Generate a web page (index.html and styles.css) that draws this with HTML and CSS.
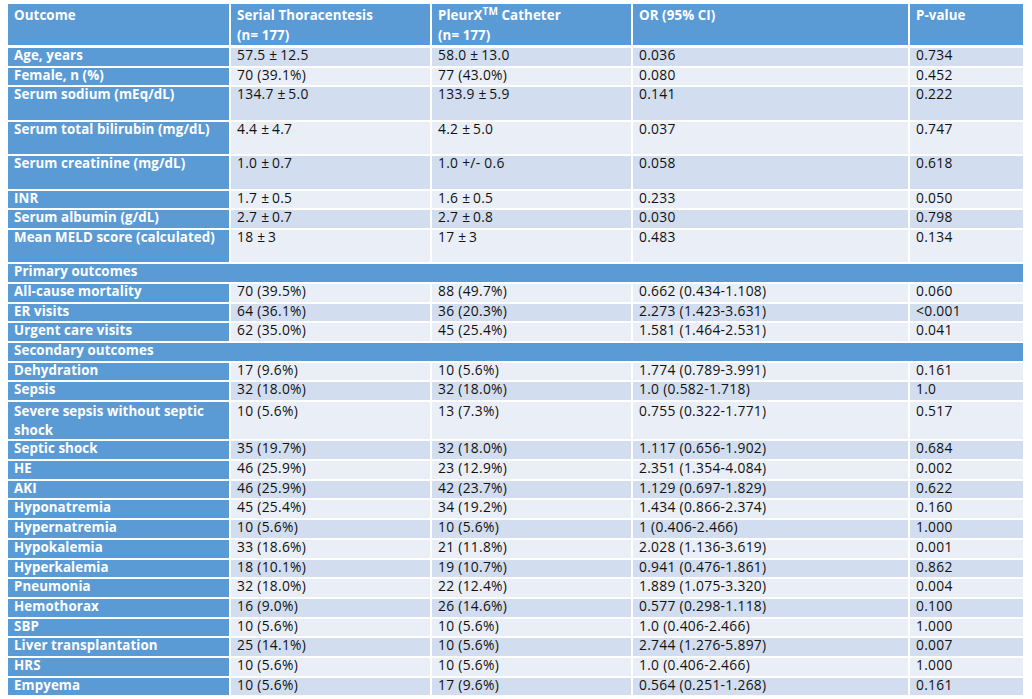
FILE: index.html
```html
<!DOCTYPE html>
<html lang="en">
<head>
<meta charset="utf-8">
<title>Outcomes: Serial Thoracentesis vs PleurX Catheter</title>
<link rel="stylesheet" href="styles.css">
</head>
<body>
<table class="outcomes">
  <colgroup>
    <col class="c-outcome">
    <col class="c-serial">
    <col class="c-pleurx">
    <col class="c-or">
    <col class="c-p">
  </colgroup>
  <thead>
    <tr>
      <th>Outcome</th>
      <th>Serial Thoracentesis<br>(n= 177)</th>
      <th>PleurX<sup>TM</sup> Catheter<br>(n= 177)</th>
      <th>OR (95% CI)</th>
      <th>P-value</th>
    </tr>
  </thead>
  <tbody>
    <tr class="dark"><th>Age, years</th><td>57.5 ±&#8201;12.5</td><td>58.0 ±&#8201;13.0</td><td>0.036</td><td>0.734</td></tr>
    <tr class="light"><th>Female, n (%)</th><td>70 (39.1%)</td><td>77 (43.0%)</td><td>0.080</td><td>0.452</td></tr>
    <tr class="dark tall"><th>Serum sodium (mEq/dL)</th><td>134.7 ±&#8201;5.0</td><td>133.9 ±&#8201;5.9</td><td>0.141</td><td>0.222</td></tr>
    <tr class="light tall"><th>Serum total bilirubin (mg/dL)</th><td>4.4 ±&#8201;4.7</td><td>4.2 ±&#8201;5.0</td><td>0.037</td><td>0.747</td></tr>
    <tr class="dark tall"><th>Serum creatinine (mg/dL)</th><td>1.0 ±&#8201;0.7</td><td>1.0 +/- 0.6</td><td>0.058</td><td>0.618</td></tr>
    <tr class="light"><th>INR</th><td>1.7 ±&#8201;0.5</td><td>1.6 ±&#8201;0.5</td><td>0.233</td><td>0.050</td></tr>
    <tr class="dark"><th>Serum albumin (g/dL)</th><td>2.7 ±&#8201;0.7</td><td>2.7 ±&#8201;0.8</td><td>0.030</td><td>0.798</td></tr>
    <tr class="light tall"><th>Mean MELD score (calculated)</th><td>18 ±&#8201;3</td><td>17 ±&#8201;3</td><td>0.483</td><td>0.134</td></tr>
    <tr class="section"><th colspan="5">Primary outcomes</th></tr>
    <tr class="light"><th>All-cause mortality</th><td>70 (39.5%)</td><td>88 (49.7%)</td><td>0.662 (0.434-1.108)</td><td>0.060</td></tr>
    <tr class="dark"><th>ER visits</th><td>64 (36.1%)</td><td>36 (20.3%)</td><td>2.273 (1.423-3.631)</td><td>&lt;0.001</td></tr>
    <tr class="light"><th>Urgent care visits</th><td>62 (35.0%)</td><td>45 (25.4%)</td><td>1.581 (1.464-2.531)</td><td>0.041</td></tr>
    <tr class="section"><th colspan="5">Secondary outcomes</th></tr>
    <tr class="light"><th>Dehydration</th><td>17 (9.6%)</td><td>10 (5.6%)</td><td>1.774 (0.789-3.991)</td><td>0.161</td></tr>
    <tr class="dark"><th>Sepsis</th><td>32 (18.0%)</td><td>32 (18.0%)</td><td>1.0 (0.582-1.718)</td><td>1.0</td></tr>
    <tr class="light double"><th>Severe sepsis without septic shock</th><td>10 (5.6%)</td><td>13 (7.3%)</td><td>0.755 (0.322-1.771)</td><td>0.517</td></tr>
    <tr class="dark"><th>Septic shock</th><td>35 (19.7%)</td><td>32 (18.0%)</td><td>1.117 (0.656-1.902)</td><td>0.684</td></tr>
    <tr class="light"><th>HE</th><td>46 (25.9%)</td><td>23 (12.9%)</td><td>2.351 (1.354-4.084)</td><td>0.002</td></tr>
    <tr class="dark"><th>AKI</th><td>46 (25.9%)</td><td>42 (23.7%)</td><td>1.129 (0.697-1.829)</td><td>0.622</td></tr>
    <tr class="light"><th>Hyponatremia</th><td>45 (25.4%)</td><td>34 (19.2%)</td><td>1.434 (0.866-2.374)</td><td>0.160</td></tr>
    <tr class="dark"><th>Hypernatremia</th><td>10 (5.6%)</td><td>10 (5.6%)</td><td>1 (0.406-2.466)</td><td>1.000</td></tr>
    <tr class="light"><th>Hypokalemia</th><td>33 (18.6%)</td><td>21 (11.8%)</td><td>2.028 (1.136-3.619)</td><td>0.001</td></tr>
    <tr class="dark"><th>Hyperkalemia</th><td>18 (10.1%)</td><td>19 (10.7%)</td><td>0.941 (0.476-1.861)</td><td>0.862</td></tr>
    <tr class="light"><th>Pneumonia</th><td>32 (18.0%)</td><td>22 (12.4%)</td><td>1.889 (1.075-3.320)</td><td>0.004</td></tr>
    <tr class="dark"><th>Hemothorax</th><td>16 (9.0%)</td><td>26 (14.6%)</td><td>0.577 (0.298-1.118)</td><td>0.100</td></tr>
    <tr class="light"><th>SBP</th><td>10 (5.6%)</td><td>10 (5.6%)</td><td>1.0 (0.406-2.466)</td><td>1.000</td></tr>
    <tr class="dark"><th>Liver transplantation</th><td>25 (14.1%)</td><td>10 (5.6%)</td><td>2.744 (1.276-5.897)</td><td>0.007</td></tr>
    <tr class="light"><th>HRS</th><td>10 (5.6%)</td><td>10 (5.6%)</td><td>1.0 (0.406-2.466)</td><td>1.000</td></tr>
    <tr class="dark"><th>Empyema</th><td>10 (5.6%)</td><td>17 (9.6%)</td><td>0.564 (0.251-1.268)</td><td>0.161</td></tr>
  </tbody>
</table>
</body>
</html>
```
FILE: styles.css
```css
html, body {
  background: #ffffff;
}
body {
  margin: 4px 0 0 8px;
  font-family: "Open Sans", Lato, sans-serif;
  font-size: 13.3px;
  color: #000000;
}
.outcomes {
  width: 1015px;
  border-collapse: separate;
  border-spacing: 0;
  table-layout: fixed;
}
.c-outcome { width: 223px; }
.c-serial { width: 201px; }
.c-pleurx { width: 201px; }
.c-or { width: 277px; }
.c-p { width: 113px; }

.outcomes th,
.outcomes td {
  padding: 0 4px 0 6px;
  text-align: left;
  vertical-align: top;
  border-right: 2px solid #ffffff;
  border-bottom: 2px solid #ffffff;
  height: 17.7px;
  line-height: 14.6px;
  white-space: nowrap;
}
.outcomes td {
  font-size: 13.8px;
  letter-spacing: 0.3px;
  color: #111111;
}
.outcomes th:last-child,
.outcomes td:last-child {
  border-right: 0;
}
.outcomes th[colspan] {
  border-right: 0;
}
.outcomes th {
  background: #5b9bd5;
  color: #ffffff;
  font-weight: 700;
  letter-spacing: 0.1px;
}
.outcomes thead th {
  height: 37px;
  line-height: 20px;
  padding-top: 1px;
  border-bottom-width: 3px;
}
.outcomes sup {
  font-size: 10px;
  line-height: 0;
  vertical-align: 5px;
}
.dark td { background: #d2deef; }
.light td { background: #eaeff7; }
.tall th, .tall td { height: 32.4px; }
.double th, .double td {
  height: 37.3px;
  line-height: 18.6px;
  white-space: normal;
}
```
